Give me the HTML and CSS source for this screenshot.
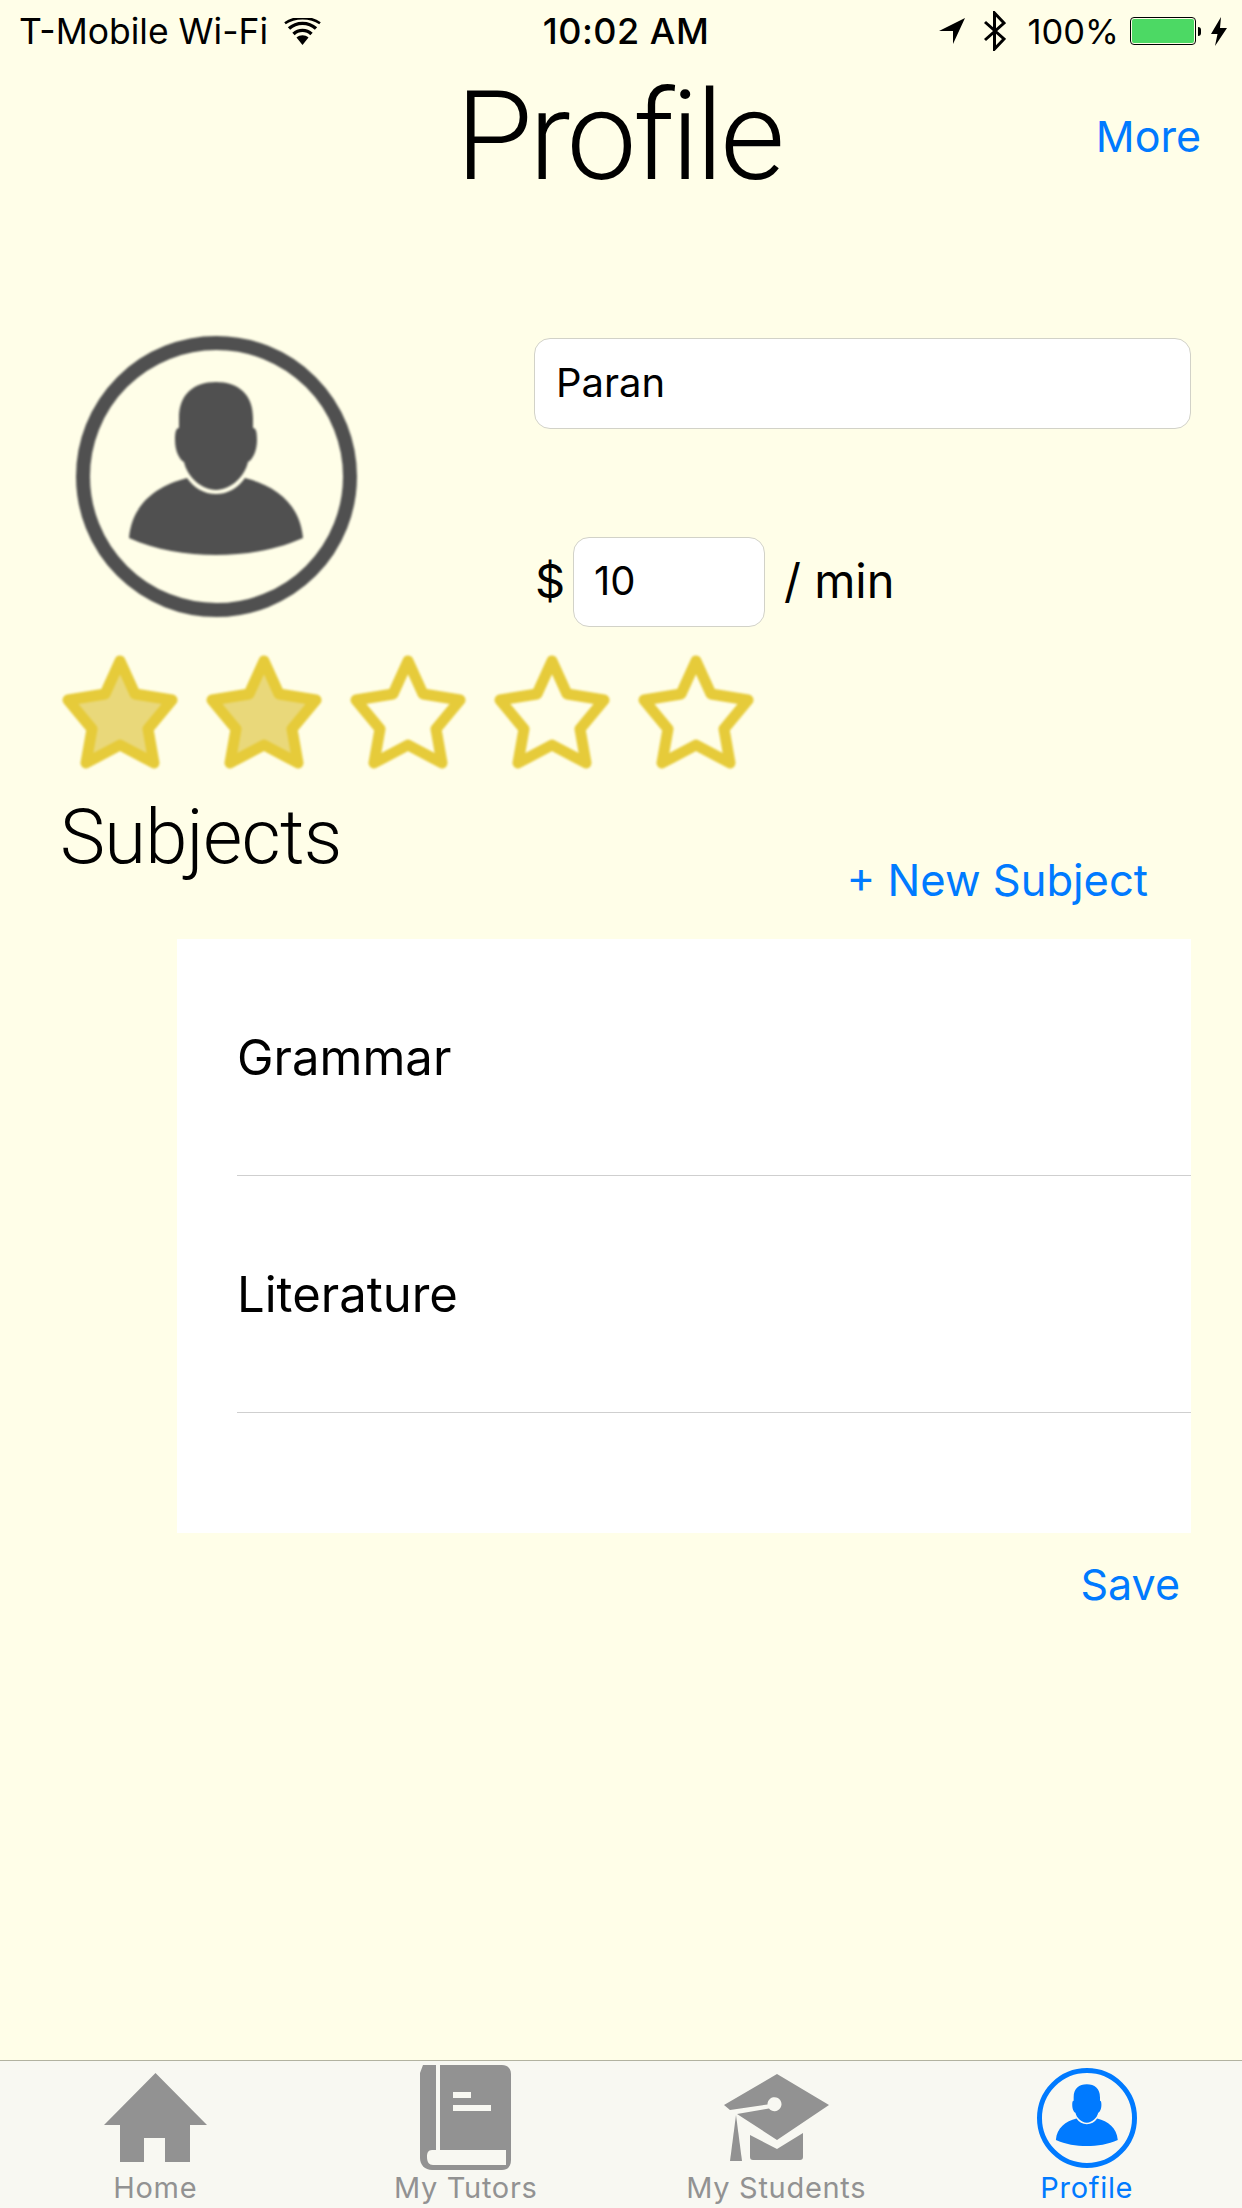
FILE: index.html
```html
<!DOCTYPE html>
<html>
<head>
	<meta charset="utf-8">
	<title>Profile</title>
	<link rel="stylesheet" href="styles.css">
</head>
<body>
	<svg class="defs" width="0" height="0">
		<symbol id="person" viewBox="0 0 281 281">
			<circle cx="140.5" cy="140.5" r="133.5" fill="none" stroke="currentColor" stroke-width="14"/>
			<path fill="currentColor" d="M140 46C118 46 103 58 103 82L103 92C100 92 99 96 99 104C99 116 104 124 108 126C111 140 125 154 140 154C155 154 169 140 172 126C176 124 181 116 181 104C181 96 180 92 177 92L177 82C177 58 162 46 140 46Z"/>
			<path fill="currentColor" d="M111 142C80 150 56 168 53 202C80 214 110 219 140 219C170 219 200 214 227 202C224 168 200 150 169 142C162 152 152 158 140 158C128 158 118 152 111 142Z"/>
		</symbol>
		<symbol id="star" viewBox="0 0 116 114">
			<polygon points="58,6 73,39 110,45 86,74 92,108 58,90 24,108 30,74 6,45 43,39"/>
		</symbol>
	</svg>

	<header class="status">
		<div class="status-left">
			<span>T-Mobile Wi-Fi</span>
			<svg class="wifi" viewBox="0 0 37 27" width="37" height="27">
				<path d="M18.5 27L12.5 19.5C16 16.6 21 16.6 24.5 19.5Z"/>
				<path d="M9.5 16C14.5 11.2 22.5 11.2 27.5 16" fill="none" stroke="#000" stroke-width="3.4"/>
				<path d="M5 10.5C12.5 3.6 24.5 3.6 32 10.5" fill="none" stroke="#000" stroke-width="3.4"/>
				<path d="M1 5.2C10.5 -1.6 26.5 -1.6 36 5.2" fill="none" stroke="#000" stroke-width="2.6"/>
			</svg>
		</div>
		<div class="status-time">10:02 AM</div>
		<div class="status-right">
			<svg viewBox="0 0 26 26" width="26" height="26"><path d="M26 0L0 13L14 13L14 26Z"/></svg>
			<svg class="bluetooth" viewBox="0 0 22 40" width="22" height="40"><path d="M1 11L20 28L10.5 38L10.5 2L20 12L1 29" fill="none" stroke="#000" stroke-width="3"/></svg>
			<span class="percent">100%</span>
			<div class="battery"><div class="battery-fill"></div></div>
			<div class="battery-nub"></div>
			<svg viewBox="0 0 16 29" width="16" height="29"><path d="M10 0L0 17L6.5 17L4 29L16 11L9 11Z"/></svg>
		</div>
	</header>

	<nav class="topbar">
		<div></div>
		<h1>Profile</h1>
		<a class="more">More</a>
	</nav>

	<section class="profile">
		<svg class="avatar"><use href="#person"/></svg>
		<div class="fields">
			<div class="field field-name">Paran</div>
			<div class="rate">
				<span class="dollar">$</span>
				<div class="field field-rate">10</div>
				<span class="per">/ min</span>
			</div>
		</div>
	</section>

	<div class="stars">
		<svg class="star star-on"><use href="#star"/></svg>
		<svg class="star star-on"><use href="#star"/></svg>
		<svg class="star"><use href="#star"/></svg>
		<svg class="star"><use href="#star"/></svg>
		<svg class="star"><use href="#star"/></svg>
	</div>

	<div class="subjects-head">
		<h2>Subjects</h2>
		<a class="new-subject">+ New Subject</a>
	</div>

	<ul class="subjects">
		<li>Grammar</li>
		<li>Literature</li>
	</ul>

	<div class="save-row"><a class="save">Save</a></div>

	<footer class="tabbar">
		<a class="tab">
			<span class="tab-icon">
				<svg viewBox="0 0 103 89" width="103" height="89"><path d="M51.500 0L103 52L86 52L86 89L61 89L61 65L40 65L40 89L16 89L16 52L0 52Z"/></svg>
			</span>
			<span class="tab-label">Home</span>
		</a>
		<a class="tab">
			<span class="tab-icon">
				<svg viewBox="0 0 91 105" width="91" height="105"><path fill-rule="evenodd" d="M3 0L16 0L16 85L12 85C8 85 7 88 7 92C7 97 9 100 13 100L86 100L86 85L20 85L20 0L82 0C88 0 91 4 91 9L91 95C91 101 88 105 82 105L12 105C5 105 0 100 0 93L0 8ZM33 27L33 33L51 33L51 27ZM33 40L33 46L71 46L71 40Z"/></svg>
			</span>
			<span class="tab-label">My Tutors</span>
		</a>
		<a class="tab">
			<span class="tab-icon">
				<svg viewBox="0 0 105 87" width="105" height="87">
					<path d="M53 0L105 31L53 66L13 40L45 34.500A7 7 0 1 0 43.500 30.500L6 36L0 31Z"/>
					<path d="M12 41L18 87L6 87Z"/>
					<path d="M26 61L53 75L79 59L79 83Q79 86 76 86L29 86Q26 86 26 83Z"/>
				</svg>
			</span>
			<span class="tab-label">My Students</span>
		</a>
		<a class="tab tab-active">
			<span class="tab-icon">
				<svg class="tab-person"><use href="#person"/></svg>
			</span>
			<span class="tab-label">Profile</span>
		</a>
	</footer>
</body>
</html>
```

FILE: styles.css
```css
* {
	margin: 0;
	padding: 0;
	box-sizing: border-box;
}

body {
	width: 1242px;
	height: 2208px;
	display: flex;
	flex-direction: column;
	overflow: hidden;
	background: #fffee8;
	color: #000;
	font-family: Inter, "Liberation Sans", sans-serif;
}

a {
	color: #007aff;
}

.defs {
	position: absolute;
}

/* status bar */
.status {
	height: 62px;
	padding: 0 15px 0 19px;
	display: grid;
	grid-template-columns: 1fr auto 1fr;
	align-items: center;
	font-size: 35.500px;
}

.status-left,
.status-right {
	display: flex;
	align-items: center;
}

.status-left .wifi {
	margin-left: 16px;
}

.status-time {
	padding-left: 6px;
	font-size: 36px;
	font-weight: 500;
	letter-spacing: 0.500px;
}

.status-right {
	justify-content: flex-end;
}

.bluetooth {
	margin-left: 19px;
}

.percent {
	margin-left: 22px;
	font-size: 34.500px;
}

.battery {
	margin-left: 11px;
	width: 66px;
	height: 28px;
	padding: 1px;
	border: 1px solid #000;
	border-radius: 4px;
}

.battery-fill {
	height: 100%;
	border-radius: 2px;
	background: #4cd964;
}

.battery-nub {
	width: 3px;
	height: 9px;
	margin-left: 2px;
	border-radius: 0 3px 3px 0;
	background: #000;
}

.status-right svg:last-child {
	margin-left: 10px;
}

/* title */
.topbar {
	height: 146px;
	display: grid;
	grid-template-columns: 1fr auto 1fr;
	align-items: center;
}

h1 {
	padding: 2px 5px 0 0;
	font-family: Roboto, sans-serif;
	font-size: 125px;
	font-weight: 300;
	letter-spacing: -3.500px;
	line-height: 146px;
}

.more {
	justify-self: end;
	padding-right: 41px;
	font-size: 43px;
}

/* avatar and fields */
.profile {
	margin-top: 128px;
	padding: 0 51px 0 76px;
	display: flex;
	justify-content: space-between;
}

.avatar {
	width: 281px;
	height: 281px;
	color: #505050;
	filter: blur(0.8px);
}

.fields {
	width: 657px;
	padding-top: 2px;
}

.field {
	display: flex;
	align-items: center;
	background: #fff;
	border: 1px solid #d2d2c8;
	border-radius: 16px;
	padding-bottom: 3px;
	font-size: 40px;
}

.field-name {
	height: 91px;
	padding-left: 21px;
}

.rate {
	margin-top: 108px;
	display: flex;
	align-items: center;
	font-size: 47px;
}

.dollar {
	width: 39px;
	padding: 0 0 4px 1px;
}

.field-rate {
	width: 192px;
	height: 90px;
	padding-left: 20px;
}

.per {
	margin-left: 19px;
	padding-bottom: 4px;
}

/* rating */
.stars {
	margin-top: 28px;
	padding-left: 62px;
	display: flex;
	gap: 28px;
}

.star {
	width: 116px;
	height: 114px;
	fill: none;
	stroke: #e6cb3a;
	stroke-width: 11;
	stroke-linejoin: round;
	filter: blur(0.8px);
}

.star-on {
	fill: #e9d87a;
}

/* subjects */
.subjects-head {
	height: 170px;
	padding: 0 94px 0 60px;
	display: flex;
	justify-content: space-between;
	align-items: flex-start;
}

h2 {
	margin-top: 23px;
	font-family: Roboto, sans-serif;
	font-size: 76px;
	font-weight: 300;
	letter-spacing: -0.800px;
	line-height: 90px;
}

.new-subject {
	margin-top: 81px;
	font-size: 43.500px;
	line-height: 60px;
}

.subjects {
	height: 594px;
	margin: 0 51px 0 177px;
	padding-left: 60px;
	list-style: none;
	background: #fff;
}

.subjects li {
	height: 237px;
	display: flex;
	align-items: center;
	border-bottom: 1px solid #cfcfcf;
	font-size: 49px;
}

.save-row {
	padding-right: 62px;
	display: flex;
	justify-content: flex-end;
}

.save {
	font-size: 43px;
	line-height: 102px;
}

/* tab bar */
.tabbar {
	margin-top: auto;
	height: 148px;
	display: grid;
	grid-template-columns: repeat(4, 1fr);
	background: #f8f8f2;
	border-top: 1px solid #b2b2a0;
}

.tab {
	display: flex;
	flex-direction: column;
	align-items: center;
	color: #929292;
}

.tab-icon {
	height: 113px;
	display: flex;
	align-items: center;
}

.tab-icon svg {
	display: block;
	fill: #929292;
	filter: blur(0.5px);
}

.tab-label {
	margin-top: -3px;
	font-size: 29px;
	line-height: 34px;
	letter-spacing: 0.700px;
}

.tab-active {
	color: #007aff;
}

.tab-person {
	width: 100px;
	height: 100px;
	color: #007aff;
}
```
